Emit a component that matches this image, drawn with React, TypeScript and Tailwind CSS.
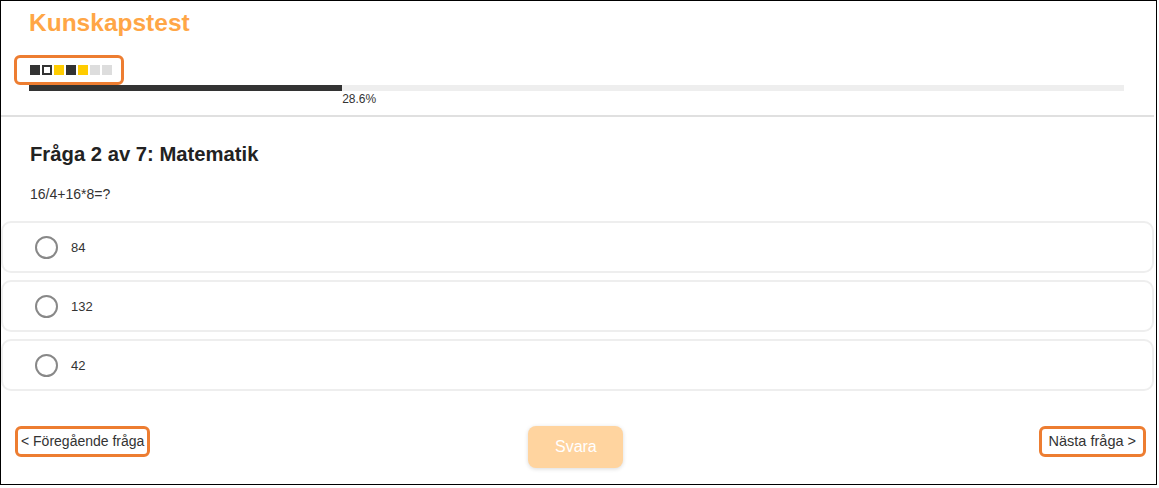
import React from "react";

const steps = ["done", "current", "warn", "done", "warn", "todo", "todo"];
const options = ["84", "132", "42"];
const progress = 28.6;

const App = () => {
  return (
    <div className="w-[1157px] h-[485px] border border-black bg-white font-['Liberation_Sans',Arial,sans-serif] text-[#333] flex flex-col">
      <h1 className="ml-[28px] mt-[8px] text-[24.5px] leading-[27px] font-bold text-[#ffa646]">Kunskapstest</h1>

      <div className="ml-[13px] mt-[19px] w-[110px] h-[30px] border-[3px] border-[#ed7d31] rounded-[6px] flex items-center gap-[2px] pl-[13px]">
        {steps.map((s, i) => (
          <span
            key={i}
            className={
              s === "done"
                ? "w-[10px] h-[10px] bg-[#333]"
                : s === "current"
                ? "w-[10px] h-[10px] bg-white border-2 border-[#333]"
                : s === "warn"
                ? "w-[10px] h-[10px] bg-[#ffcc00]"
                : "w-[10px] h-[10px] bg-[#ddd]"
            }
          />
        ))}
      </div>

      <div className="ml-[28px] w-[1095px]">
        <div className="h-[6px] bg-[#eee]">
          <div className="h-full bg-[#333]" style={{ width: `${progress}%` }} />
        </div>
        <div className="text-[12px] leading-[14px] text-[#333] mt-[1px]" style={{ paddingLeft: `${progress}%` }}>
          {progress}%
        </div>
      </div>

      <div className="mt-[9px] h-[2px] bg-[#e0e0e0] mr-[2px]" />

      <h2 className="ml-[29px] mt-[25px] text-[20.25px] leading-[24px] font-bold text-[#222]">Fråga 2 av 7: Matematik</h2>
      <p className="ml-[29px] mt-[19px] text-[14px] leading-[18px] text-[#333]">16/4+16*8=?</p>

      <div className="mt-[18px] flex flex-col gap-[7px] mr-[2px]">
        {options.map((o) => (
          <label key={o} className="h-[52px] border-2 border-[#eee] rounded-[10px] flex items-center pl-[32px] gap-[13px]">
            <span className="w-[23px] h-[23px] rounded-full border-2 border-[#888] bg-white" />
            <span className="text-[13px] text-[#333] mt-[2px]">{o}</span>
          </label>
        ))}
      </div>

      <div className="mt-[35px] flex items-start pl-[14px] pr-[10px]">
        <button className="h-[31px] px-[3px] border-[3px] border-[#ed7d31] rounded-[6px] text-[14px] text-[#333] flex items-center">
          &lt; Föregående fråga
        </button>
        <button className="ml-[378px] w-[95px] h-[42px] rounded-[8px] bg-[#ffd49f] text-white text-[16px] shadow-[0_1px_4px_rgba(0,0,0,0.15)]">
          Svara
        </button>
        <button className="ml-auto h-[31px] px-[7px] border-[3px] border-[#ed7d31] rounded-[6px] text-[14.5px] text-[#333] flex items-center">
          Nästa fråga &gt;
        </button>
      </div>
    </div>
  );
};

export default App;
